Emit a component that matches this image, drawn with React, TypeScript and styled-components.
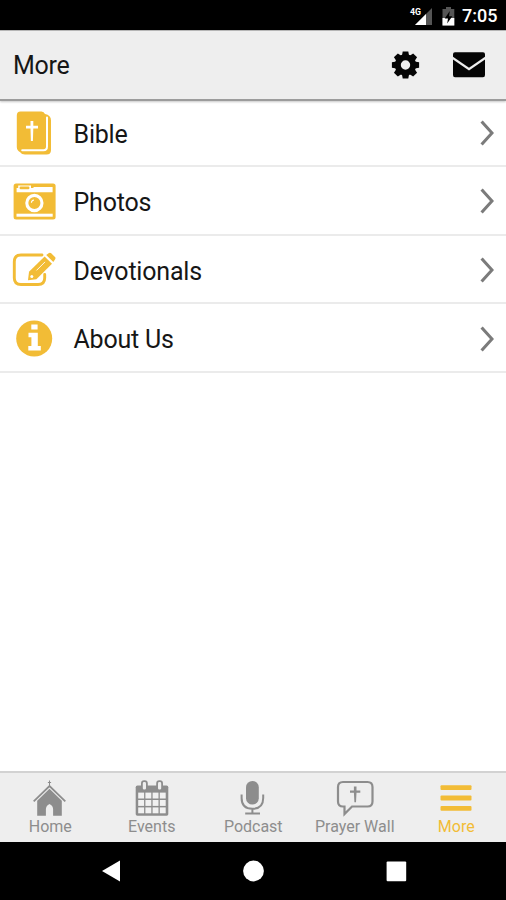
import React from "react";
import styled, { createGlobalStyle } from "styled-components";

const GlobalStyle = createGlobalStyle`
  * { box-sizing: border-box; }
  html, body { margin: 0; padding: 0; background: #fff; }
  body { font-family: Roboto, "Liberation Sans", sans-serif; overflow: hidden; }
  svg { display: block; flex: none; }
`;

const YELLOW = "#f2bc36";
const GREY = "#8d8d8d";

const Screen = styled.div`
  width: 506px;
  height: 900px;
  display: flex;
  flex-direction: column;
  background: #fff;
`;

const StatusBar = styled.div`
  height: 30px;
  flex: none;
  background: #000;
  color: #fff;
  display: flex;
  align-items: center;
  justify-content: flex-end;
  padding: 2px 9px 0 0;
`;

const StatusIcons = styled.div`
  display: flex;
  align-items: center;
  gap: 9px;
`;

const Clock = styled.span`
  font-size: 18px;
  line-height: 20px;
  font-weight: 500;
  margin-left: 7px;
  width: 35px;
  white-space: nowrap;
`;

const Header = styled.header`
  height: 71px;
  flex: none;
  background: #eee;
  border-top: 1px solid #b5b5b5;
  border-bottom: 2px solid #9c9c9c;
  box-shadow: 0 1px 2px rgba(0, 0, 0, 0.22);
  display: flex;
  align-items: center;
  padding: 0 21px 0 13px;
`;

const Title = styled.h1`
  margin: 2px 0 0;
  flex: 1;
  font-size: 25px;
  letter-spacing: -0.3px;
  line-height: 30px;
  font-weight: 400;
  color: #161616;
`;

const Actions = styled.div`
  display: flex;
  align-items: center;
  gap: 33px;
  padding-bottom: 1px;
`;

const List = styled.main`
  flex: 1;
`;

const Row = styled.div<{ $first?: boolean }>`
  height: ${(p) => (p.$first ? "66px" : "68.6px")};
  display: flex;
  align-items: center;
  padding: ${(p) => (p.$first ? "0" : "2.4px")} 12px 0 12px;
  border-bottom: 2px solid #ebebeb;
`;

const RowIcon = styled.div`
  width: 44px;
  display: flex;
  justify-content: center;
`;

const RowLabel = styled.span`
  flex: 1;
  margin-left: 17.5px;
  padding-top: 3px;
  font-size: 25px;
  letter-spacing: -0.2px;
  line-height: 30px;
  color: #161616;
`;

const TabBar = styled.nav`
  height: 71px;
  flex: none;
  display: grid;
  grid-template-columns: repeat(5, 101.5px);
  margin-left: -0.5px;
  margin-right: -1.5px;
  background: #eee;
  border-top: 2px solid #d2d2d2;
`;

const Tab = styled.div<{ $active?: boolean }>`
  display: flex;
  flex-direction: column;
  align-items: center;
  padding-top: 7px;
  color: ${(p) => (p.$active ? YELLOW : GREY)};
`;

const TabLabel = styled.span`
  margin-top: 1px;
  font-size: 16px;
  line-height: 18px;
  white-space: nowrap;
`;

const SystemNav = styled.div`
  height: 58px;
  flex: none;
  background: #000;
  display: flex;
  align-items: center;
  justify-content: space-between;
  padding: 0 99px 0 101px;
`;

const SignalIcon = () => (
  <svg width="24" height="20" viewBox="0 0 24 20">
    <path d="M23 2V19H6Z" fill="#555" />
    <path d="M17 8V19H6Z" fill="#fff" />
    <text x="1" y="9" fontSize="9.5" fontWeight="700" fill="#fff" textLength="11" lengthAdjust="spacingAndGlyphs">4G</text>
  </svg>
);

const BatteryIcon = () => (
  <svg width="13" height="20" viewBox="0 0 13 20">
    <path d="M4 1H9V3H12.3V19.5H.5V3H4Z" fill="#555" />
    <path d="M.5 12H12.3V19.5H.5Z" fill="#fff" />
    <path d="M7.8 5L2.7 12.5H6L5.2 17.5L10.3 10.3H7Z" fill="#000" />
  </svg>
);

const GearIcon = () => {
  const teeth = [0, 45, 90, 135, 180, 225, 270, 315];
  return (
    <svg width="29" height="28" viewBox="-14.5 -14 29 28">
      <circle r="7.7" fill="none" stroke="#050505" strokeWidth="6" />
      {teeth.map((a) => (
        <path key={a} d="M-3.6-9L-2.8-13.6H2.8L3.6-9Z" fill="#050505" transform={`rotate(${a})`} />
      ))}
    </svg>
  );
};

const MailIcon = () => (
  <svg width="32" height="26" viewBox="0 0 32 26">
    <path d="M2 .3H30Q32 .3 32 2.3V4.8L16 15.8L0 4.8V2.3Q0 .3 2 .3Z" fill="#050505" />
    <path d="M0 7.5L16 18.5L32 7.5V23Q32 25.2 30 25.2H2Q0 25.2 0 23Z" fill="#050505" />
  </svg>
);

const BibleIcon = () => (
  <svg width="36" height="44" viewBox="0 0 36 44">
    <path d="M4.5.5H25.5Q28 .5 29 3Q35 4 35 9.5V39Q35 43.5 30.5 43.5H9Q5.5 43.5 4.2 41.2Q.8 39.5 .8 36V4.5Q.8 .5 4.5 .5Z" fill={YELLOW} />
    <path d="M31 6.5V35.5Q31 39.2 27.5 39.2H6.2" fill="none" stroke="#fff" strokeWidth="2" strokeLinecap="round" />
    <path d="M14.5 10H17.3V14.8H22V17.5H17.3L16.9 30H14.9L14.5 17.5H10V14.8H14.5Z" fill="#fff" />
  </svg>
);

const CameraIcon = () => (
  <svg width="43" height="37" viewBox="0 0 43 37">
    <rect x=".6" y=".6" width="42" height="36" rx="2.5" fill={YELLOW} />
    <path d="M3.6 9.2V5H5.2V2.4H18V5H20.5V4H39.6V9.2Z" fill="#fff" />
    <rect x="6.6" y="3.6" width="9.8" height="2.6" rx="1" fill={YELLOW} />
    <rect x="3.5" y="30.7" width="36.2" height="3" fill="#fff" />
    <circle cx="21.4" cy="20" r="7.6" fill="none" stroke="#fff" strokeWidth="3.1" />
    <path d="M18.4 19.8Q18.5 17.2 21 17" fill="none" stroke="#fff" strokeWidth="1.1" />
  </svg>
);

const EditIcon = () => (
  <svg width="44" height="36" viewBox="0 0 44 36">
    <path d="M30 3H9Q2.3 3 2.3 9.8V26Q2.3 32.5 9 32.5H26Q32.7 32.5 32.7 26V22.5" fill="none" stroke={YELLOW} strokeWidth="2.9" strokeLinecap="round" />
    <path d="M16 28.2L17 19.8L32.6 4.5L40 11.7L24.4 27.3Z" fill={YELLOW} />
    <path d="M34.2 3L37 1Q38.2 .3 39.2 1.3L43 5.1Q44 6.2 43 7.4L41.3 10Z" fill={YELLOW} />
    <path d="M24.5 18.4L33 9.9" stroke="#fff" strokeWidth=".9" />
    <circle cx="19.8" cy="24.4" r="1.5" fill="#fff" />
  </svg>
);

const InfoIcon = () => (
  <svg width="37" height="37" viewBox="0 0 37 37">
    <circle cx="18.2" cy="18.5" r="18" fill={YELLOW} />
    <path d="M15.3 4.5H21.6V9.6H15.3ZM12.5 12.8H21.8V26H24.8V30.5H12.3V26H15.4V17.3H12.5Z" fill="#fff" />
  </svg>
);

const Chevron = () => (
  <svg width="14" height="26" viewBox="0 0 14 26">
    <path d="M1.6 1.5L12 13L1.6 24.5" fill="none" stroke="#7b7b7b" strokeWidth="3.1" />
  </svg>
);

const ChurchIcon = () => (
  <svg width="34" height="37" viewBox="0 0 34 37">
    <path d="M16.5 .5V7M14.9 2.5H18.1" stroke={GREY} strokeWidth="1" />
    <path d="M.7 21.3L16.5 6L32.3 21.3" fill="none" stroke={GREY} strokeWidth="1.8" />
    <path d="M16.5 8.8L28.8 20.8V35.8H20.1V29Q19.9 25.6 16.5 24Q13.1 25.6 12.9 29V35.8H4.2V20.8Z" fill={GREY} />
  </svg>
);

const CalendarIcon = () => (
  <svg width="34" height="37" viewBox="0 0 34 37">
    <path d="M2.5 5.5H31.5Q33.3 5.5 33.3 7.3V34Q33.3 35.8 31.7 35.8H2.3Q.7 35.8 .7 34V7.3Q.7 5.5 2.5 5.5Z" fill={GREY} />
    <g fill="#f1f1f1">
      {[12.6, 20, 27.4].map((y) =>
        [3.2, 10.4, 17.6, 24.8].map((x) => <rect key={`${x}-${y}`} x={x} y={y} width="5.9" height="5.9" />)
      )}
    </g>
    <rect x="6.9" y="1.2" width="5" height="9.2" rx="2.2" fill="#eee" stroke={GREY} strokeWidth="1.8" />
    <rect x="22.1" y="1.2" width="5" height="9.2" rx="2.2" fill="#eee" stroke={GREY} strokeWidth="1.8" />
  </svg>
);

const MicIcon = () => (
  <svg width="26" height="37" viewBox="0 0 26 37">
    <rect x="6" y="1" width="12.8" height="23.6" rx="6.4" fill={GREY} />
    <path d="M1.6 14.5V18Q1.6 28.8 12.4 28.8Q23.2 28.8 23.2 18V14.5M12.4 28.8V33.5M5.2 33.6H20" fill="none" stroke={GREY} strokeWidth="2" />
  </svg>
);

const PrayerIcon = () => (
  <svg width="38" height="37" viewBox="0 0 38 37">
    <path d="M7 2H31.5Q36.5 2 36.5 7V21.5Q36.5 26.5 31.5 26.5H16L8.5 34V26.5H7Q2 26.5 2 21.5V7Q2 2 7 2Z" fill="none" stroke={GREY} strokeWidth="2.2" />
    <path d="M17.9 6.5H20.5V10.5H24.3V12.8H20.5L20 22.2H18.4L17.9 12.8H14V10.5H17.9Z" fill={GREY} />
  </svg>
);

const MenuIcon = () => (
  <svg width="32" height="37" viewBox="0 0 32 37">
    {[5.3, 15.6, 26].map((y) => (
      <rect key={y} x=".5" y={y} width="31" height="4.8" rx="1" fill={YELLOW} />
    ))}
  </svg>
);

const rows = [
  { label: "Bible", Icon: BibleIcon },
  { label: "Photos", Icon: CameraIcon },
  { label: "Devotionals", Icon: EditIcon },
  { label: "About Us", Icon: InfoIcon },
];

const tabs = [
  { label: "Home", Icon: ChurchIcon },
  { label: "Events", Icon: CalendarIcon },
  { label: "Podcast", Icon: MicIcon },
  { label: "Prayer Wall", Icon: PrayerIcon },
  { label: "More", Icon: MenuIcon },
];

export default function App() {
  return (
    <Screen>
      <GlobalStyle />
      <StatusBar>
        <StatusIcons>
          <SignalIcon />
          <BatteryIcon />
        </StatusIcons>
        <Clock>7:05</Clock>
      </StatusBar>
      <Header>
        <Title>More</Title>
        <Actions>
          <GearIcon />
          <MailIcon />
        </Actions>
      </Header>
      <List>
        {rows.map(({ label, Icon }, i) => (
          <Row key={label} $first={i === 0}>
            <RowIcon>
              <Icon />
            </RowIcon>
            <RowLabel>{label}</RowLabel>
            <Chevron />
          </Row>
        ))}
      </List>
      <TabBar>
        {tabs.map(({ label, Icon }) => (
          <Tab key={label} $active={label === "More"}>
            <Icon />
            <TabLabel>{label}</TabLabel>
          </Tab>
        ))}
      </TabBar>
      <SystemNav>
        <svg width="20" height="22" viewBox="0 0 20 22">
          <path d="M1 11L19 .6V21.4Z" fill="#fff" />
        </svg>
        <svg width="22" height="22" viewBox="0 0 22 22">
          <circle cx="10.5" cy="11" r="10.4" fill="#fff" />
        </svg>
        <svg width="21" height="21" viewBox="0 0 21 21">
          <rect x=".6" y=".6" width="19.6" height="19.6" rx="1" fill="#fff" />
        </svg>
      </SystemNav>
    </Screen>
  );
}
